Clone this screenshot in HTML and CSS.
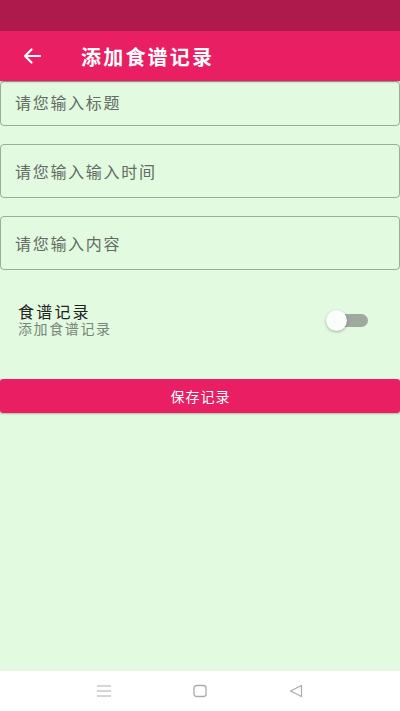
FILE: index.html
```html
<!DOCTYPE html>
<html lang="zh">
<head>
<meta charset="utf-8">
<link rel="stylesheet" href="styles.css">
</head>
<body>
<div class="screen">
  <div class="status"></div>
  <header class="appbar">
    <svg class="back" width="20" height="20" viewBox="0 0 20 20"><path d="M18 10H3M9.5 3.5L3 10l6.5 6.5" fill="none" stroke="#fff" stroke-width="2.2" stroke-linecap="round" stroke-linejoin="round"/></svg>
    <h1 class="title">添加食谱记录</h1>
  </header>
  <main class="content">
    <div class="field first">请您输入标题</div>
    <div class="field">请您输入输入时间</div>
    <div class="field">请您输入内容</div>
    <div class="toggle-row">
      <div class="toggle-text">
        <div class="t-main">食谱记录</div>
        <div class="t-sub">添加食谱记录</div>
      </div>
      <div class="switch"><span class="thumb"></span></div>
    </div>
    <div class="save">保存记录</div>
  </main>
  <nav class="navbar">
    <svg width="16" height="14" viewBox="0 0 16 14"><path d="M1 2h14M1 7h14M1 12h14" stroke="#aaa" stroke-width="1.2"/></svg>
    <svg width="16" height="14" viewBox="0 0 16 14"><rect x="2" y="1.5" width="12" height="11" rx="2.5" fill="none" stroke="#aaa" stroke-width="1.3"/></svg>
    <svg width="16" height="14" viewBox="0 0 16 14"><path d="M13.5 1.5L2.5 7l11 5.5z" fill="none" stroke="#aaa" stroke-width="1.2" stroke-linejoin="round"/></svg>
  </nav>
</div>
</body>
</html>
```
FILE: styles.css
```css
* { box-sizing: border-box; margin: 0; padding: 0; }
html, body { width: 400px; height: 711px; overflow: hidden; }
body { font-family: "Noto Sans CJK SC", "Noto Sans", sans-serif; background: #e1fae0; }
.screen { display: flex; flex-direction: column; height: 711px; }
.status { height: 31px; background: #ae1a4b; flex: none; }
.appbar { height: 50px; background: #e91e63; display: flex; align-items: center; flex: none; box-shadow: 0 1px 2px rgba(0,0,0,0.2); position: relative; z-index: 1; }
.back { margin-left: 22px; }
.title { color: #fff; font-size: 20px; font-weight: bold; margin-left: 39px; letter-spacing: 2.2px; }
.content { flex: 1; display: flex; flex-direction: column; background: #e1fae0; }
.field { height: 54px; border: 1px solid #9cab9b; border-radius: 4px; margin-top: 18px; padding-left: 14px; display: flex; align-items: center; font-size: 16px; color: #646b64; letter-spacing: 1.7px; }
.field.first { margin-top: 0; height: 45px; align-items: flex-start; padding-top: 8px; }
.toggle-row { display: flex; justify-content: space-between; align-items: flex-start; padding: 33px 32px 0 18px; height: 109px; }
.t-main { font-size: 16px; color: #222; line-height: 17px; letter-spacing: 2.2px; }
.t-sub { font-size: 14px; color: #7a847a; line-height: 17px; letter-spacing: 1.6px; }
.switch { position: relative; width: 40px; height: 13px; background: #a0a9a0; border-radius: 7px; margin-top: 11px; }
.thumb { position: absolute; left: -2px; top: -4px; width: 21px; height: 21px; border-radius: 50%; background: #fcfcfc; box-shadow: 0 1px 3px rgba(0,0,0,0.3); }
.save { height: 34px; background: #e91e63; border-radius: 3px; color: #fff; font-size: 14px; letter-spacing: 1px; padding-left: 1px; display: flex; align-items: center; justify-content: center; box-shadow: 0 1px 2px rgba(0,0,0,0.25); }
.navbar { height: 40px; background: #fff; flex: none; display: flex; justify-content: center; align-items: center; gap: 80px; }
```
